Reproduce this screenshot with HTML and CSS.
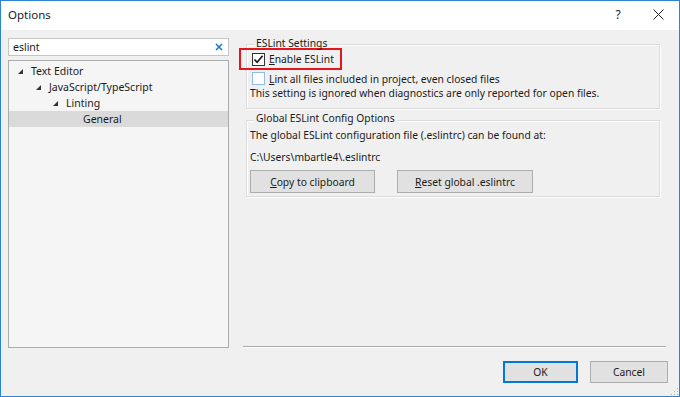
FILE: index.html
```html
<!DOCTYPE html>
<html>
  <head>
    <meta charset='utf-8'>
    <title>Options</title>
    <link rel="stylesheet" href="styles.css">
  </head>
  <body>
    <div class="dialog">
      <header class="titlebar">
        <span class="title">Options</span>
        <span class="help">?</span>
        <span class="close">
          <svg width="11" height="11" viewBox="0 0 11 11"><path d="M0.5 0.5 L10.5 10.5 M10.5 0.5 L0.5 10.5" stroke="#222" stroke-width="1"/></svg>
        </span>
      </header>

      <div class="content">
        <aside class="nav">
          <div class="search">
            <span>eslint</span>
            <svg width="8" height="8" viewBox="0 0 8 8"><path d="M1 1 L7 7 M7 1 L1 7" stroke="#1c79d0" stroke-width="1.6"/></svg>
          </div>
          <ul class="tree">
            <li class="node lvl0"><i class="caret"></i>Text Editor</li>
            <li class="node lvl1"><i class="caret"></i>JavaScript/TypeScript</li>
            <li class="node lvl2"><i class="caret"></i>Linting</li>
            <li class="node lvl3 selected">General</li>
          </ul>
        </aside>

        <section class="page">
          <div class="group first">
            <div class="group-title">ESLint Settings</div>
            <label class="check highlight"><span class="box checked"><svg width="11" height="11" viewBox="0 0 11 11"><path d="M1.5 5.5 L4.2 8.3 L9.6 1.8" fill="none" stroke="#1a1a1a" stroke-width="1.7"/></svg></span><span><u>E</u>nable ESLint</span></label>
            <label class="check"><span class="box hover"></span><span><u>L</u>int all files included in project, even closed files</span></label>
            <p class="note">This setting is ignored when diagnostics are only reported for open files.</p>
          </div>

          <div class="group second">
            <div class="group-title">Global ESLint Config Options</div>
            <p class="line">The global ESLint configuration file (.eslintrc) can be found at:</p>
            <p class="line path">C:\Users\mbartle4\.eslintrc</p>
            <div class="buttons">
              <button class="btn copy"><u>C</u>opy to clipboard</button>
              <button class="btn reset"><u>R</u>eset global .eslintrc</button>
            </div>
          </div>

          <div class="separator"></div>
        </section>
      </div>

      <footer class="actions">
        <button class="btn ok">OK</button>
        <button class="btn cancel">Cancel</button>
        <i class="grip"></i>
      </footer>
    </div>
  </body>
</html>
```

FILE: styles.css
```css
* {
  box-sizing: border-box;
}

body {
  margin: 0;
  font-family: "Noto Sans", "Segoe UI", sans-serif;
  font-size: 10.3px;
  color: #1b1b1b;
}

.dialog {
  width: 680px;
  height: 397px;
  border: 1px solid #2a84d2;
  background: #f0f0f0;
  display: flex;
  flex-direction: column;
  overflow: hidden;
}

.titlebar {
  height: 29px;
  background: #fff;
  display: flex;
  align-items: center;
  padding: 0 0 2px 7px;
  font-size: 11.5px;
}

.title {
  flex: 1;
}

.help {
  width: 20px;
  text-align: center;
  margin-right: 25px;
  font-size: 12px;
}

.close {
  display: flex;
  margin-right: 15px;
}

.content {
  display: flex;
  height: 318px;
}

.nav {
  width: 221px;
  margin-left: 7px;
  padding-top: 8px;
  display: flex;
  flex-direction: column;
  gap: 4px;
}

.search {
  height: 18px;
  background: #fff;
  border: 1px solid #c5c5c5;
  display: flex;
  align-items: center;
  justify-content: space-between;
  padding: 0 5px 0 4px;
  font-size: 10.5px;
}

.tree {
  list-style: none;
  margin: 0;
  padding: 2px 0 0;
  height: 288px;
  background: #f5f5f5;
  border: 1px solid #acacac;
}

.node {
  height: 16px;
  display: flex;
  align-items: center;
  font-size: 10.5px;
}

.caret {
  width: 0;
  height: 0;
  border-left: 5px solid transparent;
  border-bottom: 5px solid #333;
  margin-right: 8px;
}

.lvl0 { padding-left: 9px; }
.lvl1 { padding-left: 27px; }
.lvl2 { padding-left: 44px; }
.lvl3 { padding-left: 74px; }

.selected {
  background: #dadada;
}

.page {
  width: 423px;
  margin-left: 14px;
  display: flex;
  flex-direction: column;
}

.group {
  margin: 0 6px 0 3px;
  border: 1px solid #dcdcdc;
  box-shadow: inset 1px 1px 0 #fff, 1px 1px 0 #fff;
  padding: 0 4px 0 3px;
}

.group.first {
  margin-top: 14px;
  padding-bottom: 8px;
}

.group.second {
  margin-top: 11px;
  padding-bottom: 3px;
}

.group-title {
  width: fit-content;
  height: 14px;
  line-height: 14px;
  margin: -9px 0 0 4px;
  padding: 0 2px;
  background: #f0f0f0;
}

.second .group-title {
  margin-top: -10px;
}

.check {
  display: flex;
  align-items: center;
  gap: 4px;
  height: 15px;
  margin-left: 2px;
}

.check.highlight {
  width: 103px;
  height: 22px;
  margin: -2px 0 0 -11px;
  padding-left: 11px;
  border: 2px solid #e3151d;
}

.box {
  width: 13px;
  height: 13px;
  background: #fff;
  border: 1px solid #333;
  display: flex;
  align-items: center;
  justify-content: center;
}

.box.hover {
  border-color: #8fbde8;
}

.check:not(.highlight) {
  margin-top: 1px;
}

.note,
.line {
  margin: 0;
  height: 14px;
  line-height: 14px;
}

.second .line:first-of-type {
  margin-top: 3px;
}

.line.path {
  margin-top: 8px;
}

.buttons {
  display: flex;
  gap: 22px;
  margin-top: 6px;
}

.btn {
  font: inherit;
  color: inherit;
  height: 23px;
  background: #e1e1e1;
  border: 1px solid #adadad;
  padding: 0;
}

.copy { width: 125px; }
.reset { width: 136px; }

.separator {
  margin-top: auto;
  height: 2px;
  border-top: 1px solid #a8a8a8;
  border-bottom: 1px solid #fff;
}

.actions {
  display: flex;
  justify-content: flex-end;
  gap: 12px;
  padding: 13px 11px 0 0;
  position: relative;
}

.btn.ok {
  width: 75px;
  height: 22px;
  border-color: #0078d7;
  box-shadow: inset 0 0 0 1px #0078d7;
}

.btn.cancel {
  width: 78px;
  height: 22px;
}

.grip {
  position: absolute;
  right: 1px;
  bottom: -12px;
  width: 8px;
  height: 8px;
  background: radial-gradient(circle, #b5b5b5 0.8px, transparent 1px) 0 0 / 3px 3px;
  clip-path: polygon(100% 0, 100% 100%, 0 100%);
}
```
